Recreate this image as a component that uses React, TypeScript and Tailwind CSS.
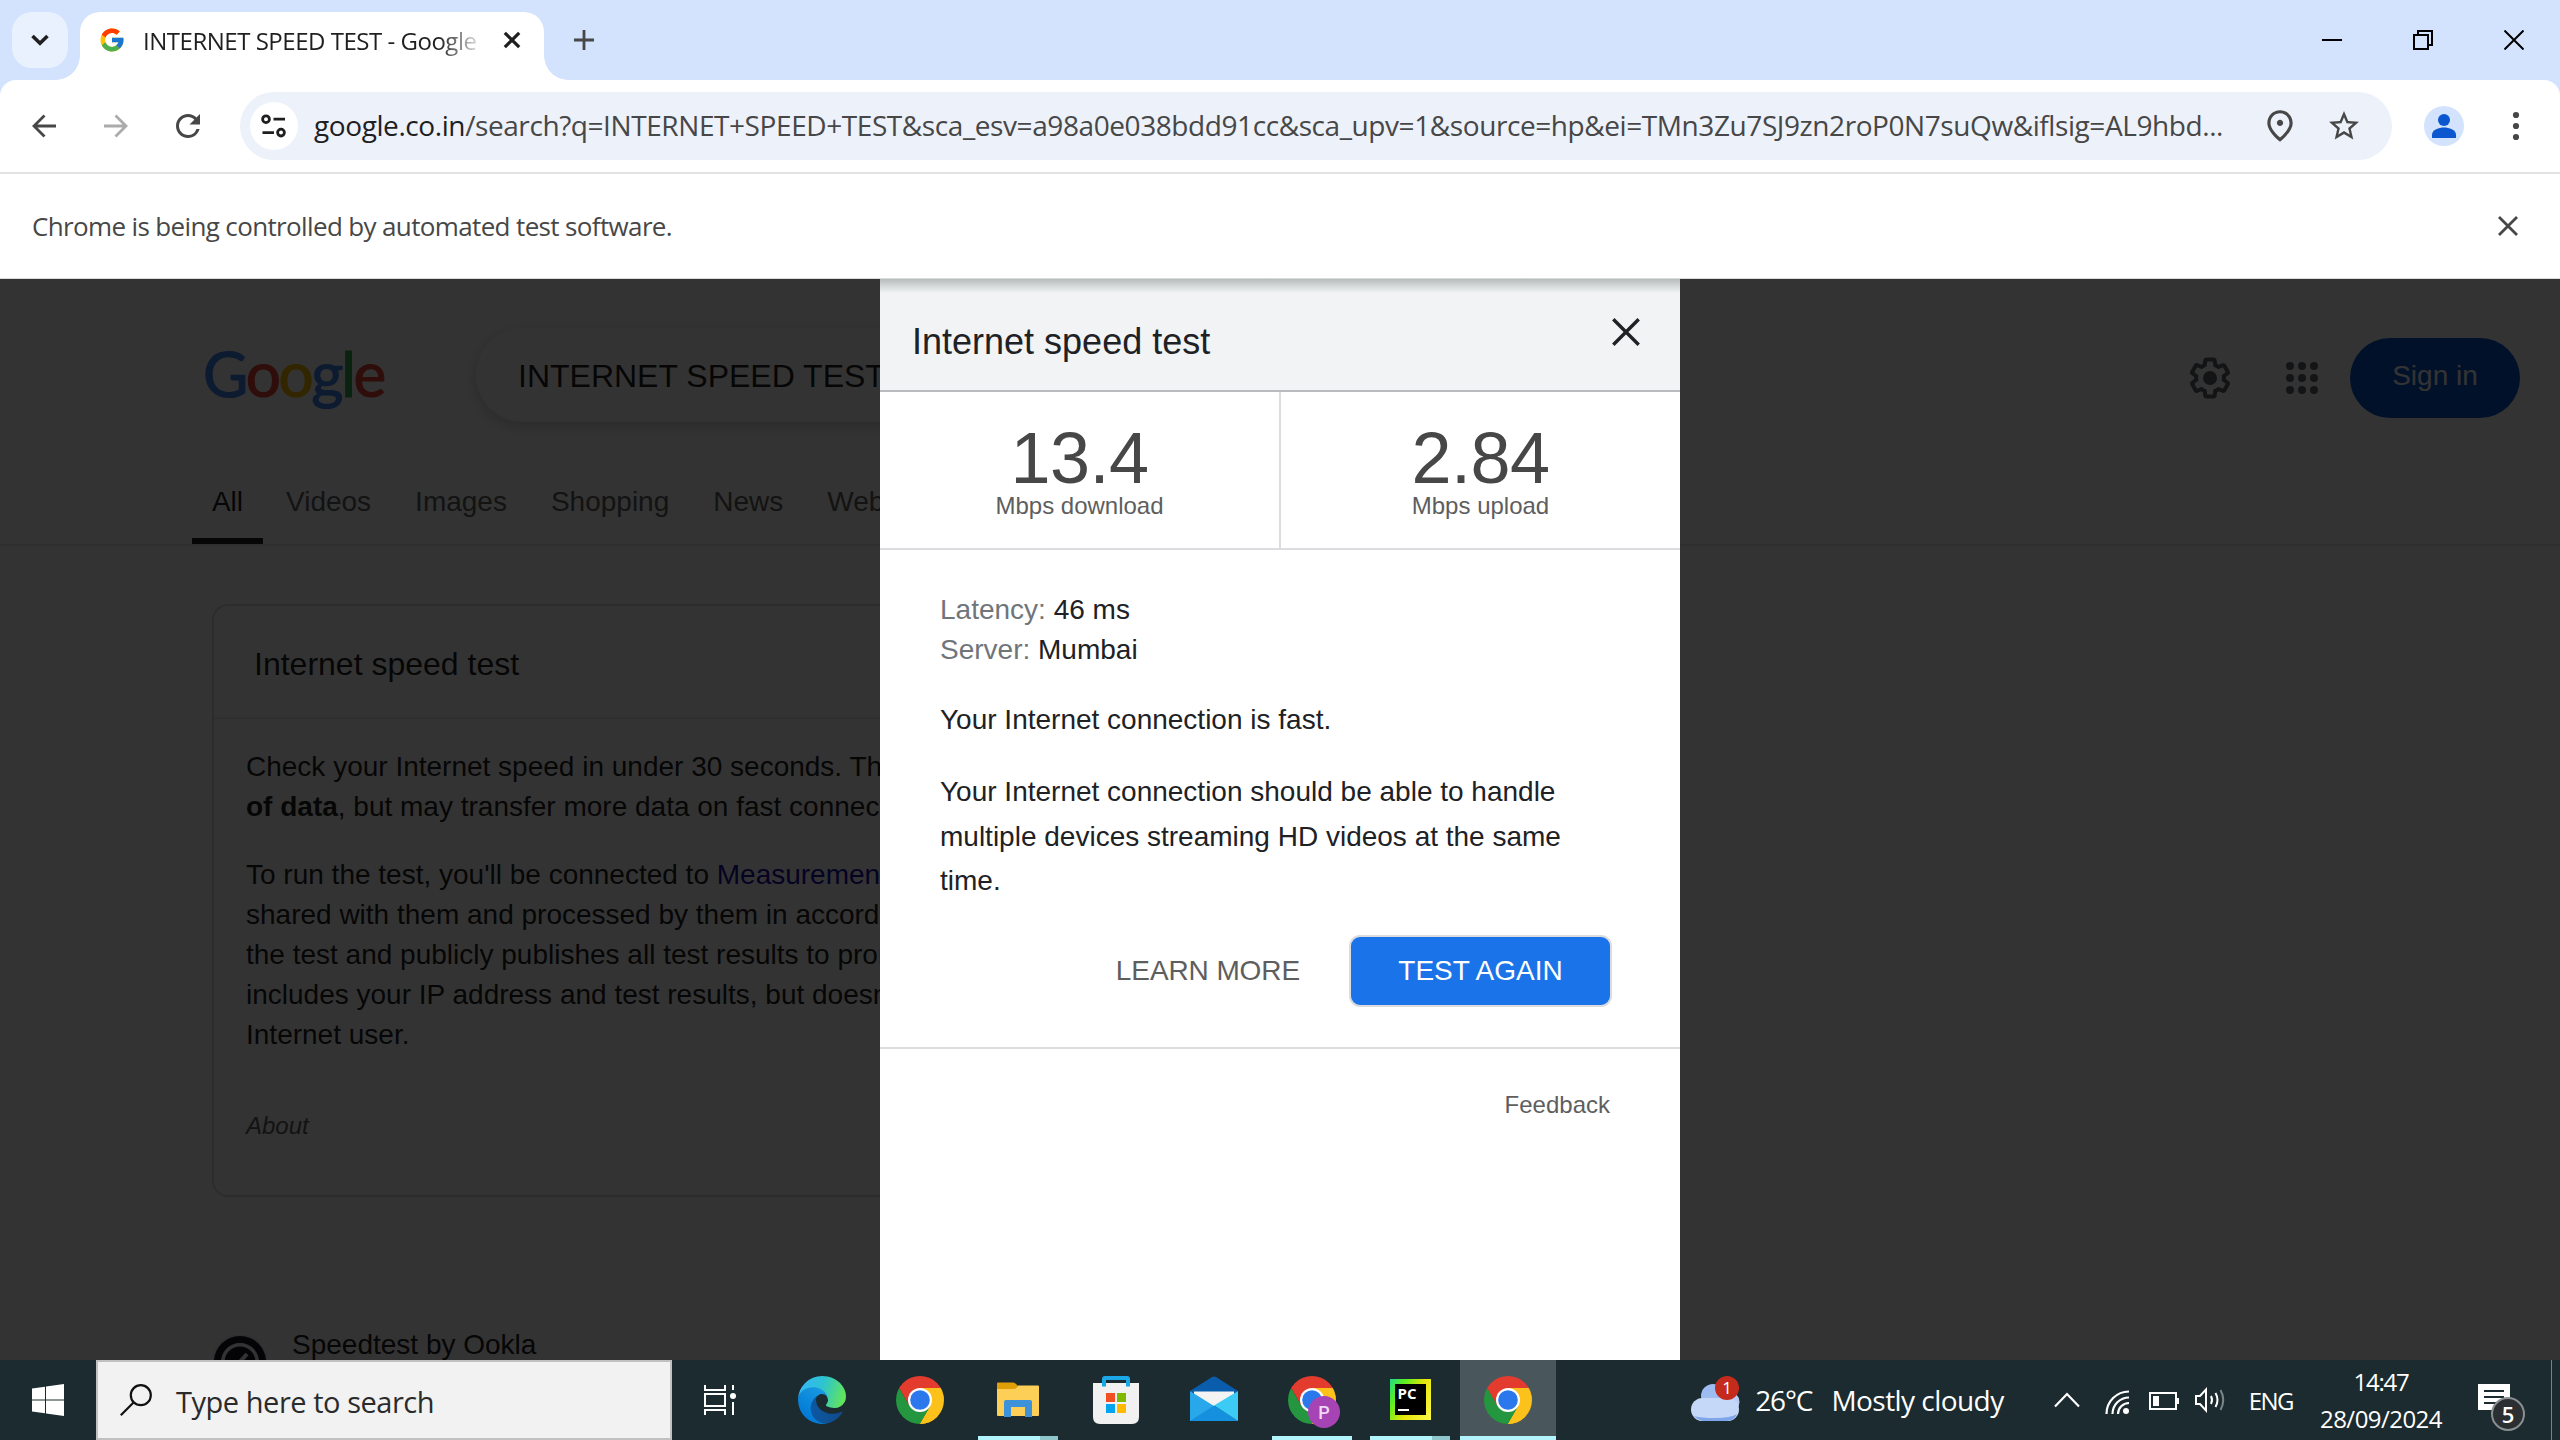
import React from "react";
import { FcGoogle } from "react-icons/fc";
import { MdStarBorder, MdOutlinePlace, MdRefresh } from "react-icons/md";

const segoe = "font-['Open_Sans','Noto_Sans',sans-serif]";
const arial = "font-['Liberation_Sans',Arial,sans-serif]";

function ChromeLogo({ id }: { id: string }) {
  return (
    <svg viewBox="0 0 48 48" className="size-12">
      <defs>
        <clipPath id={id}>
          <circle cx="24" cy="24" r="24" />
        </clipPath>
      </defs>
      <g clipPath={`url(#${id})`}>
        <path d="M0 0H48V12H24L13.6 18L3.2 12Z" fill="#e33b2e" />
        <path d="M24 12H48V48H24L34.4 30Z" fill="#fcc21b" />
        <path d="M3.2 12L13.6 30L24 36L34.4 30L24 48H0V12Z" fill="#24963f" />
        <path d="M3.2 12L13.6 30L16 16L24 12Z" fill="#e33b2e" />
        <path d="M34.4 30L24 48H40L48 20L34 12H24Z" fill="#fcc21b" />
      </g>
      <circle cx="24" cy="24" r="12" fill="#fff" />
      <circle cx="24" cy="24" r="9.8" fill="#2b78ec" />
    </svg>
  );
}

function EdgeLogo() {
  return (
    <svg viewBox="0 0 256 256" className="size-12">
      <defs>
        <linearGradient id="ea" x1="60" x2="240" y1="177" y2="177" gradientUnits="userSpaceOnUse">
          <stop offset="0" stopColor="#0c59a4" />
          <stop offset="1" stopColor="#114a8b" />
        </linearGradient>
        <linearGradient id="eb" x1="150" x2="40" y1="60" y2="230" gradientUnits="userSpaceOnUse">
          <stop offset="0" stopColor="#1b9de2" />
          <stop offset="1" stopColor="#0078d4" />
        </linearGradient>
        <linearGradient id="ec" x1="20" x2="240" y1="60" y2="130" gradientUnits="userSpaceOnUse">
          <stop offset="0" stopColor="#35b9f1" />
          <stop offset=".45" stopColor="#2dc3d0" />
          <stop offset="1" stopColor="#62e55c" />
        </linearGradient>
      </defs>
      <path fill="url(#ea)" d="M231 190.5c-3.4 1.8-6.9 3.4-10.5 4.7a101.6 101.6 0 01-35.9 6.5c-47.3 0-88.5-32.5-88.5-74.3a31.5 31.5 0 0116.4-27.3c-42.8 1.8-53.8 46.4-53.8 72.5 0 74 68.1 81.4 82.8 81.4 7.9 0 19.8-2.3 27-4.6l1.3-.4a128.3 128.3 0 0066.6-52.8 4 4 0 00-5.4-5.7z" />
      <path fill="url(#eb)" d="M105.7 241.4a79.2 79.2 0 01-22.7-21.3 80.7 80.7 0 0129.5-120c3.2-1.5 8.5-4.1 15.6-4a32.4 32.4 0 0125.7 13 31.9 31.9 0 016.3 18.7c0-.2 24.5-79.6-80-79.6-43.9 0-80 41.6-80 78.2a130.2 130.2 0 0012.1 56 128 128 0 00156.4 67 75.5 75.5 0 01-62.8-8z" />
      <path fill="url(#ec)" d="M152.3 148.9c-.9 1-3.4 2.5-3.4 5.6 0 2.6 1.7 5.2 4.8 7.3 14.3 10 41.4 8.6 41.5 8.6a59.6 59.6 0 0030.3-8.3 61.4 61.4 0 0030.4-52.9c.3-22.4-8-37.3-11.3-43.9C223.5 23.9 177.7 0 128 0A128 128 0 000 126.2c.5-36.5 36.8-66 80-66 3.5 0 23.5.3 42 10a72.6 72.6 0 0130.9 29.3c6.1 10.6 7.2 24.1 7.2 29.5s-2.7 13.3-7.9 19.9z" />
    </svg>
  );
}

function TabStrip() {
  return (
    <div className="flex h-20 bg-[#d3e3fd] pl-3">
      <div className="mt-3 flex size-14 shrink-0 items-center justify-center rounded-[20px] bg-[#e9f1fe]">
        <svg viewBox="0 0 20 12" className="h-3 w-5" fill="none" stroke="#1f1f1f" strokeWidth="3.6">
          <path d="M2.5 2L10 9.2L17.5 2" />
        </svg>
      </div>
      <div className="relative mt-3 ml-3 flex h-[68px] w-[464px] items-center rounded-t-[20px] bg-white pl-5">
        <div className="absolute bottom-0 -left-6 size-6 bg-[radial-gradient(circle_at_0_0,transparent_23.5px,#fff_24px)]" />
        <div className="absolute -right-6 bottom-0 size-6 bg-[radial-gradient(circle_at_100%_0,transparent_23.5px,#fff_24px)]" />
        <FcGoogle className="mb-3 size-6 shrink-0 scale-[1.15]" />
        <div className="mb-[10px] ml-[19px] w-[338px] overflow-hidden whitespace-nowrap [mask-image:linear-gradient(to_right,#000_296px,transparent_342px)]">
          <span className={`text-[24px] leading-[32px] tracking-[-0.48px] text-[#1f1f1f] ${segoe}`}>INTERNET SPEED TEST - Google</span>
        </div>
        <svg viewBox="0 0 20 20" className="mb-3 ml-[21px] size-5" fill="none" stroke="#1f1f1f" strokeWidth="3.2">
          <path d="M2.8 2.8L17.2 17.2M17.2 2.8L2.8 17.2" />
        </svg>
      </div>
      <svg viewBox="0 0 20 20" className="mt-[30px] ml-[30px] size-5" fill="none" stroke="#474747" strokeWidth="2.8">
        <path d="M10 0V20M0 10H20" />
      </svg>
      <div className="mt-[30px] ml-auto flex gap-[71px] pr-9">
        <svg viewBox="0 0 20 20" className="size-5" fill="none" stroke="#000" strokeWidth="2">
          <path d="M0 10H20" />
        </svg>
        <svg viewBox="0 0 20 20" className="size-5" fill="none" stroke="#000" strokeWidth="2">
          <path d="M1 5H15V19H1ZM5 5V1H19V15H15" />
        </svg>
        <svg viewBox="0 0 20 20" className="size-5" fill="none" stroke="#000" strokeWidth="2">
          <path d="M.5 .5L19.5 19.5M19.5 .5L.5 19.5" />
        </svg>
      </div>
    </div>
  );
}

function Toolbar() {
  return (
    <div className="bg-[#d3e3fd]">
      <div className="flex h-[94px] items-center rounded-t-[16px] border-b-2 border-[#e1e3e1] bg-white pl-8">
        <svg viewBox="0 0 24 24" className="size-6" fill="none" stroke="#474747" strokeWidth="2.8">
          <path d="M24 12H2.5M12.5 1.5L2 12L12.5 22.5" />
        </svg>
        <svg viewBox="0 0 24 24" className="ml-12 size-6" fill="none" stroke="#ababab" strokeWidth="2.8">
          <path d="M0 12H21.5M11.5 1.5L22 12L11.5 22.5" />
        </svg>
        <MdRefresh className="ml-[42px] size-9 text-[#474747]" />
        <div className="ml-[34px] flex h-[68px] w-[2152px] items-center rounded-full bg-[#ecf1fa] pl-[10px]">
          <div className="flex size-12 items-center justify-center rounded-full bg-white">
            <svg viewBox="0 0 26 24" className="h-6 w-[26px]" fill="none" stroke="#1f1f1f" strokeWidth="2.8">
              <circle cx="5" cy="5.2" r="3.4" />
              <circle cx="20" cy="18.6" r="3.4" />
              <path d="M12.5 5.2H24M1.5 18.6H13" />
            </svg>
          </div>
          <div className="ml-[16px] w-[1916px] pb-0.5 whitespace-nowrap">
            <span className={`text-[28px] leading-[38px] tracking-[-0.415px] text-[#474747] ${segoe}`}>
              <span className="text-[#1f1f1f]">google.co.in</span>/search?q=INTERNET+SPEED+TEST&amp;sca_esv=a98a0e038bdd91cc&amp;sca_upv=1&amp;source=hp&amp;ei=TMn3Zu7SJ9zn2roP0N7suQw&amp;iflsig=AL9hbd...
            </span>
          </div>
          <MdOutlinePlace className="ml-[31px] size-[38px] text-[#474747]" />
          <MdStarBorder className="ml-[27px] size-9 text-[#474747]" />
        </div>
        <svg viewBox="0 0 40 40" className="ml-8 size-10">
          <circle cx="20" cy="20" r="20" fill="#d3e3fd" />
          <circle cx="20" cy="14" r="6" fill="#0b57d0" />
          <path d="M8 32V28.5C8 24 15 21.5 20 21.5S32 24 32 28.5V32Z" fill="#0b57d0" />
        </svg>
        <svg viewBox="0 0 8 30" className="ml-12 h-[30px] w-2" fill="#474747">
          <circle cx="4" cy="4" r="3.1" />
          <circle cx="4" cy="15" r="3.1" />
          <circle cx="4" cy="26" r="3.1" />
        </svg>
      </div>
    </div>
  );
}

function InfoBar() {
  return (
    <div className="flex h-[105px] items-center justify-between border-b border-[#d9dbda] bg-white pr-[42px] pl-8">
      <span className={`text-[26px] leading-[36px] tracking-[-0.64px] whitespace-nowrap text-[#474747] ${segoe}`}>
        Chrome is being controlled by automated test software.
      </span>
      <svg viewBox="0 0 20 20" className="size-5" fill="none" stroke="#474747" strokeWidth="2.8">
        <path d="M1 1L19 19M19 1L1 19" />
      </svg>
    </div>
  );
}

const navTabs = ["Videos", "Images", "Shopping", "News", "Web"];

function SearchPage() {
  return (
    <div className={`flex h-[1081px] flex-col bg-white ${arial}`}>
      <div className="flex h-[192px] items-center pl-[203px]">
        <div className="mb-[5px] w-[273px] whitespace-nowrap">
          <span className="font-['Lato',sans-serif] text-[62px] leading-[74px] tracking-[-2.3px] [-webkit-text-stroke:1.2px]">
            <span className="text-[#4285f4]">G</span>
            <span className="text-[#ea4335]">o</span>
            <span className="text-[#fbbc05]">o</span>
            <span className="text-[#4285f4]">g</span>
            <span className="text-[#34a853]">l</span>
            <span className="text-[#ea4335]">e</span>
          </span>
        </div>
        <div className="flex h-[94px] w-[1180px] items-center rounded-full bg-white pt-0.5 pl-[42px] shadow-[0_4px_12px_2px_rgba(32,33,36,0.16)]">
          <span className="text-[32px] leading-[40px] whitespace-nowrap text-[#1f1f1f]">INTERNET SPEED TEST</span>
        </div>
        <div className="mt-[6px] ml-auto flex items-center pr-10">
          <svg viewBox="0 0 24 24" className="size-12" fill="#5f6368">
            <path d="M13.85 22.25h-3.7c-.74 0-1.36-.54-1.45-1.27l-.27-1.89c-.27-.14-.53-.29-.79-.46l-1.8.72c-.7.26-1.47-.03-1.81-.65L2.2 15.53c-.35-.66-.2-1.44.36-1.88l1.53-1.19c-.01-.15-.02-.3-.02-.46 0-.15.01-.31.02-.46l-1.52-1.19c-.59-.45-.74-1.26-.37-1.88l1.85-3.19c.34-.62 1.11-.9 1.79-.63l1.81.73c.26-.17.52-.32.78-.46l.27-1.91c.09-.7.71-1.25 1.44-1.25h3.7c.74 0 1.36.54 1.45 1.27l.27 1.89c.27.14.53.29.79.46l1.8-.72c.71-.26 1.48.03 1.82.65l1.84 3.18c.36.66.2 1.44-.36 1.88l-1.52 1.19c.01.15.02.3.02.46s-.01.31-.02.46l1.52 1.19c.56.45.72 1.23.37 1.86l-1.86 3.22c-.34.62-1.11.9-1.8.63l-1.8-.72c-.26.17-.52.32-.78.46l-.27 1.91c-.1.68-.72 1.22-1.46 1.22zm-3.23-2h2.76l.37-2.55.53-.22c.44-.18.88-.44 1.34-.78l.45-.34 2.38.96 1.38-2.4-2.03-1.58.07-.56c.03-.26.06-.51.06-.78s-.03-.53-.06-.78l-.07-.56 2.03-1.58-1.39-2.4-2.39.96-.45-.35c-.42-.32-.87-.58-1.33-.77l-.52-.22-.37-2.55h-2.76l-.37 2.55-.53.21c-.44.19-.88.44-1.34.79l-.45.33-2.38-.95-1.39 2.39 2.03 1.58-.07.56a7 7 0 0 0-.06.79c0 .26.02.53.06.78l.07.56-2.03 1.58 1.38 2.4 2.39-.96.45.35c.43.33.86.58 1.33.77l.53.22.38 2.55z" />
            <circle cx="12" cy="12" r="3.5" />
          </svg>
          <svg viewBox="0 0 24 24" className="ml-11 size-12" fill="#5f6368">
            {[6, 12, 18].map((y) => [6, 12, 18].map((x) => <circle key={`${x}-${y}`} cx={x} cy={y} r="2" />))}
          </svg>
          <div className="ml-6 flex h-20 w-[170px] items-center justify-center rounded-full bg-[#0b57d0] pb-1 text-[28px] text-white">
            Sign in
          </div>
        </div>
      </div>

      <div className="flex h-[75px] border-b-2 border-[#ebebeb] pl-[192px] text-[28px] leading-[40px]">
        <div className="mt-[11px] h-[62px] w-[71px] border-b-6 border-[#1f1f1f] text-center text-[#1f1f1f]">All</div>
        <div className="mt-[11px] ml-[23px] flex gap-[44px] text-[#5e5e5e]">
          {navTabs.map((t) => (
            <span key={t}>{t}</span>
          ))}
        </div>
      </div>

      <div className="mt-[58px] ml-[212px] h-[593px] w-[1304px] shrink-0 rounded-[16px] border-2 border-[#dadce0]">
        <div className="flex h-[113px] items-center border-b-2 border-[#ebebeb] pt-[5px] pl-10 text-[32px] text-[#1f1f1f]">Internet speed test</div>
        <div className="pt-[28px] pl-[32px] text-[28px] leading-[40px] whitespace-nowrap text-[#1f1f1f]">
          <p>Check your Internet speed in under 30 seconds. The speed test usually transfers <b>less than 40 MB</b></p>
          <p><b>of data</b>, but may transfer more data on fast connections.</p>
          <p className="mt-7">To run the test, you'll be connected to <span className="text-[#1a0dab]">Measurement Lab (M-Lab)</span></p>
          <p>shared with them and processed by them in accordance</p>
          <p>the test and publicly publishes all test results to promote</p>
          <p>includes your IP address and test results, but doesn't</p>
          <p>Internet user.</p>
          <p className="mt-[56px] text-[24px] leading-[30px] text-[#5e5e5e] italic">About</p>
        </div>
      </div>

      <div className="mt-[127px] flex h-9 shrink-0 overflow-hidden pl-[212px]">
        <svg viewBox="0 0 56 56" className="mt-[10px] size-14 shrink-0">
          <circle cx="28" cy="28" r="27.5" fill="#e8eaed" />
          <circle cx="28" cy="28" r="26" fill="#141526" />
          <circle cx="28" cy="28" r="19" fill="#fff" />
          <circle cx="28" cy="28" r="15.5" fill="#141526" />
          <path d="M26 30L35 20" stroke="#fff" strokeWidth="4" />
        </svg>
        <span className="ml-6 pt-px text-[28px] leading-[40px] whitespace-nowrap text-[#202124]">Speedtest by Ookla</span>
      </div>
    </div>
  );
}

function Stat({ value, label }: { value: string; label: string }) {
  return (
    <div className="flex-1 pt-[30px] text-center">
      <div className="text-[72px] leading-[72px] tracking-[-0.5px] text-[#474747]">{value}</div>
      <div className="text-[24px] leading-[24px] text-[#5e5e5e]">{label}</div>
    </div>
  );
}

function SpeedDialog() {
  return (
    <div className={`absolute top-0 left-[880px] flex h-[1081px] w-[800px] flex-col bg-white ${arial}`}>
      <div className="flex h-[113px] shrink-0 justify-between border-b-2 border-[#b9bbbe] bg-[#f1f3f4] pr-10 pl-8 text-[#202124]">
        <h2 className="pt-[43px] text-[36px] leading-[40px]">Internet speed test</h2>
        <svg viewBox="0 0 28 28" className="mt-[39px] size-7" fill="none" stroke="#202124" strokeWidth="3.4">
          <path d="M1.3 1.3L26.7 26.7M26.7 1.3L1.3 26.7" />
        </svg>
      </div>
      <div className="flex h-[158px] shrink-0 border-b-2 border-[#dadce0]">
        <Stat value="13.4" label="Mbps download" />
        <div className="w-0.5 bg-[#dadce0]" />
        <Stat value="2.84" label="Mbps upload" />
      </div>
      <div className="flex h-[499px] shrink-0 flex-col border-b-2 border-[#dadce0] px-[60px] pt-10 text-[28px] text-[#202124]">
        <p className="leading-[40px]"><span className="text-[#70757a]">Latency:</span> 46 ms</p>
        <p className="leading-[40px]"><span className="text-[#70757a]">Server:</span> Mumbai</p>
        <p className="mt-[30px] leading-[40px]">Your Internet connection is fast.</p>
        <p className="mt-[30px] leading-[44.5px]">Your Internet connection should be able to handle multiple devices streaming HD videos at the same time.</p>
        <div className="mt-[31px] mr-2 flex items-center justify-end gap-[49px]">
          <span className="tracking-[-0.1px] text-[#5e5e5e]">LEARN MORE</span>
          <button className="h-[72px] w-[263px] rounded-[11px] border-2 border-[#dadce0] bg-[#1a73e8] text-white">TEST AGAIN</button>
        </div>
      </div>
      <div className="pt-[40px] pr-[70px] text-right text-[24px] leading-[32px] text-[#5e5e5e]">Feedback</div>
      <div className="absolute inset-x-0 top-0 h-[14px] bg-gradient-to-b from-[#5f6b66]/40 to-transparent" />
    </div>
  );
}

function Taskbar() {
  return (
    <div className={`flex h-20 bg-[#1b2b2f] text-white ${segoe}`}>
      <div className="flex w-24 items-center justify-center">
        <svg viewBox="0 0 32 32" className="size-8" fill="#fff">
          <path d="M0 4.5L13 2.7V15.4H0ZM14 2.5L32 0V15.4H14ZM0 16.4H13V29.3L0 27.5ZM14 16.4H32V32L14 29.5Z" />
        </svg>
      </div>
      <div className="flex w-[576px] items-center border-2 border-[#c1c1c1] bg-[#f2f2f2] pl-[22px] text-[#2b2b2b]">
        <svg viewBox="0 0 32 32" className="size-8" fill="none" stroke="#111" strokeWidth="2.2">
          <circle cx="20.8" cy="11.2" r="10" />
          <path d="M13.5 18.5L.8 31.2" />
        </svg>
        <span className="ml-[24px] pt-[3px] text-[29px] tracking-[-0.46px] whitespace-nowrap">Type here to search</span>
      </div>
      <div className="flex w-24 items-center justify-center">
        <svg viewBox="0 0 32 30" className="h-[30px] w-8" fill="none" stroke="#fff" strokeWidth="2">
          <path d="M1 0V5H21V0M1 9H21V21H1ZM1 30V25H21V30M29 0V5M29 17V30" />
          <circle cx="29" cy="11" r="3" fill="#fff" stroke="none" />
        </svg>
      </div>
      <div className="ml-[6px] flex w-24 items-center justify-center"><EdgeLogo /></div>
      <div className="ml-[2px] flex w-24 items-center justify-center"><ChromeLogo id="c1" /></div>
      <div className="relative ml-[10px] flex w-20 items-center justify-center">
        <svg viewBox="0 0 42 36" className="h-9 w-[42px]">
          <path d="M0 1.5Q0 .5 1 .5H16Q18 .5 19 2L21 4L18 8H0Z" fill="#e09f06" />
          <path d="M0 7H17Q19 7 20 5L21 3.5H41Q42 3.5 42 4.5V33Q42 34 41 34H1Q0 34 0 33Z" fill="#fdcf56" />
          <path d="M7 35V20Q7 18 9 18H33Q35 18 35 20V35H28V25H14V35Z" fill="#3d92d9" />
        </svg>
        <div className="absolute bottom-0 left-0 h-1 w-[62px] bg-[#b1f4fb]" />
        <div className="absolute right-0 bottom-0 h-1 w-[18px] bg-[#8fc6cc]" />
      </div>
      <div className="ml-[10px] flex w-24 items-center justify-center">
        <svg viewBox="0 0 46 48" className="h-12 w-[46px]">
          <path d="M0 7H46V41Q46 48 39 48H7Q0 48 0 41Z" fill="#f1f1f1" />
          <path d="M11 10.5V3Q11 2 12 2H34Q35 2 35 3V10.5" fill="none" stroke="#1ba8e8" strokeWidth="4" />
          <path d="M13 17H22V26H13Z" fill="#f25022" />
          <path d="M24 17H33V26H24Z" fill="#7fba00" />
          <path d="M13 28H22V37H13Z" fill="#00a4ef" />
          <path d="M24 28H33V37H24Z" fill="#ffb900" />
        </svg>
      </div>
      <div className="ml-[2px] flex w-24 items-center justify-center">
        <svg viewBox="0 0 48 46" className="mb-[3px] h-[46px] w-12">
          <path d="M0 15L22 1Q24 0 26 1L48 15L40 20H8Z" fill="#0a5cad" />
          <path d="M4 15.5H44V30H4Z" fill="#f3f3f3" />
          <path d="M0 15L48 45H0Z" fill="#28a8ea" />
          <path d="M48 15L24 29.5L48 45Z" fill="#3ccbf4" />
          <path d="M0 45L24 29.5L48 45Z" fill="#1490df" />
        </svg>
      </div>
      <div className="relative ml-[10px] flex w-20 items-center justify-center">
        <ChromeLogo id="c2" />
        <div className="absolute top-9 right-3 flex size-8 items-center justify-center rounded-full bg-[#a644b5] font-['Roboto',sans-serif] text-[18px] font-medium text-[#f0d9f4]">P</div>
        <div className="absolute bottom-0 left-0 h-1 w-20 bg-[#b1f4fb]" />
      </div>
      <div className="relative ml-[18px] flex w-20 justify-center pt-[19px]">
        <div className="h-[41px] w-[41px] bg-[linear-gradient(120deg,#21d789_0%,#5bf01e_25%,#e6e60a_55%,#fcf84a_100%)] p-[5px]">
          <div className="h-[31px] bg-black pl-[3px] text-[15px] leading-[19px] font-bold">
            PC
            <div className="mt-[6px] h-0.5 w-[11px] bg-white" />
          </div>
        </div>
        <div className="absolute bottom-0 left-0 h-1 w-[62px] bg-[#b1f4fb]" />
        <div className="absolute right-0 bottom-0 h-1 w-[18px] bg-[#8fc6cc]" />
      </div>
      <div className="relative ml-[10px] flex w-24 items-center justify-center bg-[#49565b]">
        <ChromeLogo id="c3" />
        <div className="absolute bottom-0 left-0 h-1 w-24 bg-[#b1f4fb]" />
      </div>

      <div className="ml-auto flex items-center">
        <div className="relative flex h-12 w-12 items-end">
          <svg viewBox="0 0 48 32" className="mb-[2px] h-8 w-12 overflow-visible">
            <circle cx="37" cy="4" r="9" fill="#f59a1c" />
            <circle cx="22" cy="6" r="12" fill="#9dbcf2" />
            <circle cx="38" cy="12" r="10.5" fill="#b9cff7" />
            <rect x="0" y="8" width="48" height="23" rx="11.5" fill="#c6d8f8" />
            <path d="M3 26Q8 31 13 31H36Q43 31 46 24Q40 28 24 28Q10 28 3 26Z" fill="#7fa5ea" />
          </svg>
          <div className="absolute top-0 right-0 flex size-6 items-center justify-center rounded-full bg-[#c42b1c] text-[17px]">1</div>
        </div>
        <span className="ml-4 text-[28px] tracking-[-1.1px] whitespace-nowrap">26°C</span>
        <span className="ml-[19px] text-[28px] tracking-[-0.55px] whitespace-nowrap">Mostly cloudy</span>
        <svg viewBox="0 0 26 16" className="ml-[50px] h-4 w-[26px]" fill="none" stroke="#fff" strokeWidth="2.2">
          <path d="M1 14.5L13 2L25 14.5" />
        </svg>
        <svg viewBox="0 0 24 24" className="mt-1 ml-[25px] size-6" fill="none" stroke="#fff" strokeWidth="2.2">
          <path d="M1.5 24A22.5 22.5 0 0 1 24 1.5M7.5 24A16.5 16.5 0 0 1 24 7.5M13 24A11 11 0 0 1 24 13" />
          <circle cx="21" cy="21" r="3" fill="#fff" stroke="none" />
        </svg>
        <svg viewBox="0 0 30 18" className="mt-0.5 ml-5 h-[18px] w-[30px]" fill="none" stroke="#fff" strokeWidth="2">
          <path d="M1 1H27V17H1Z" />
          <path d="M29 6V12" />
          <path d="M4 4H10V14H4Z" fill="#fff" stroke="none" />
        </svg>
        <svg viewBox="0 0 34 26" className="ml-[15px] h-[26px] w-[34px]" fill="none" stroke="#fff" strokeWidth="2">
          <path d="M2 9H6L12 2.5V23.5L6 17H2Z" />
          <path d="M17 9Q19 13 17 17M21.5 6Q25.5 13 21.5 20" />
          <path d="M26.5 3Q32 13 26.5 23" stroke="#7c8689" />
        </svg>
        <span className="ml-[21px] pt-0.5 text-[24px] tracking-[-1.5px]">ENG</span>
        <div className="ml-[26px] w-[124px] text-center text-[24px] leading-[37px] whitespace-nowrap">
          <div className="tracking-[-1.2px]">14:47</div>
          <div className="tracking-[-0.54px]">28/09/2024</div>
        </div>
        <div className="relative mt-4 ml-[35px] h-12 w-12">
          <svg viewBox="0 0 32 32" className="size-8">
            <path d="M0 0H32V26H21L16 32V26H0Z" fill="#fff" />
            <path d="M6 7H26M6 13H26M6 19H20" stroke="#1b2b2f" strokeWidth="2" />
          </svg>
          <div className="absolute top-[13px] left-[13px] flex size-[34px] items-center justify-center rounded-full border-2 border-[#8a9092] bg-[#2b2f31] text-[22px] font-semibold">5</div>
        </div>
        <div className="ml-[25px] h-20 w-px bg-[#77838a]" />
        <div className="w-2" />
      </div>
    </div>
  );
}

export default function App() {
  return (
    <div className="h-[1440px] w-[2560px] overflow-hidden">
      <TabStrip />
      <Toolbar />
      <InfoBar />
      <div className="relative h-[1081px] overflow-hidden">
        <SearchPage />
        <div className="absolute inset-0 bg-black/80" />
        <SpeedDialog />
      </div>
      <Taskbar />
    </div>
  );
}
